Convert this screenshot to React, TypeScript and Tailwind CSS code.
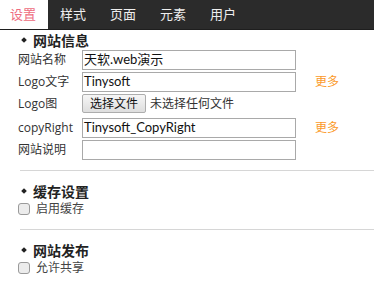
import { ReactNode } from "react";

const FONT = "font-['Lato','Noto_Sans_CJK_SC',sans-serif]";
const LABEL = "font-['Open_Sans','Noto_Sans_CJK_SC',sans-serif] text-[12px] text-[#333]";

const TABS = ["设置", "样式", "页面", "元素", "用户"];

function Title({ children, className }: { children: ReactNode; className?: string }) {
  return (
    <div className={`flex h-[20px] items-center pl-[4px] ${className ?? ""}`}>
      <span className="inline-block h-[4px] w-[4px] rotate-45 bg-[#222]" />
      <span className="ml-[7px] text-[14px] font-bold text-[#222]">{children}</span>
    </div>
  );
}

function Row({ label, value, more }: { label: string; value: string; more?: boolean }) {
  return (
    <div className="mb-[2px] flex h-[20px] items-center">
      <div className={`w-[64px] ${LABEL}`}>{label}</div>
      <div className="flex h-[20px] w-[214px] items-center border border-[#a9a9a9] pl-[1px] text-[13px] text-[#111]">
        {value}
      </div>
      {more && <span className="ml-[19px] text-[12px] text-[#fb9a2a]">更多</span>}
    </div>
  );
}

function Check({ label }: { label: string }) {
  return (
    <label className="flex h-[16px] items-center">
      <input
        type="checkbox"
        className="h-[12px] w-[12px] appearance-none rounded-[3px] border border-[#9a9a9a] bg-[#ececec]"
      />
      <span className="ml-[6px] text-[12px] text-[#444]">{label}</span>
    </label>
  );
}

export default function App() {
  return (
    <div className={`h-[288px] w-[374px] overflow-hidden bg-white ${FONT}`}>
      <div className="flex h-[30px] border-b border-[#1e1e1e] bg-[#2b2b2b]">
        {TABS.map((t, i) => (
          <div
            key={t}
            className={
              i === 0
                ? "mr-[2px] flex w-[48px] items-center bg-white pl-[10px] text-[13px] text-[#ee6c80]"
                : "flex w-[50px] items-center pl-[10px] text-[13px] text-[#eeeeee]"
            }
          >
            {t}
          </div>
        ))}
      </div>

      <div className="pl-[18px]">
        <Title>网站信息</Title>
        <Row label="网站名称" value="天软.web演示" />
        <Row label="Logo文字" value="Tinysoft" more />
        <div className="mb-[2px] flex h-[22px] items-start">
          <div className={`flex h-[20px] w-[64px] items-center ${LABEL}`}>Logo图</div>
          <button className="flex h-[19px] w-[64px] items-center justify-center rounded-[2px] border border-[#adadad] bg-gradient-to-b from-[#f6f6f6] to-[#dedede] text-[12px] text-[#111]">
            选择文件
          </button>
          <span className="ml-[4px] flex h-[19px] items-center text-[12px] text-[#333]">未选择任何文件</span>
        </div>
        <Row label="copyRight" value="Tinysoft_CopyRight" more />
        <Row label="网站说明" value="" />

        <div className="ml-[2px] mt-[10px] h-[1px] bg-[#d6d6d6]" />
        <Title className="mt-[10px]">缓存设置</Title>
        <Check label="启用缓存" />

        <div className="ml-[2px] mt-[12px] h-[1px] bg-[#d6d6d6]" />
        <Title className="mt-[10px]">网站发布</Title>
        <Check label="允许共享" />
      </div>
    </div>
  );
}
